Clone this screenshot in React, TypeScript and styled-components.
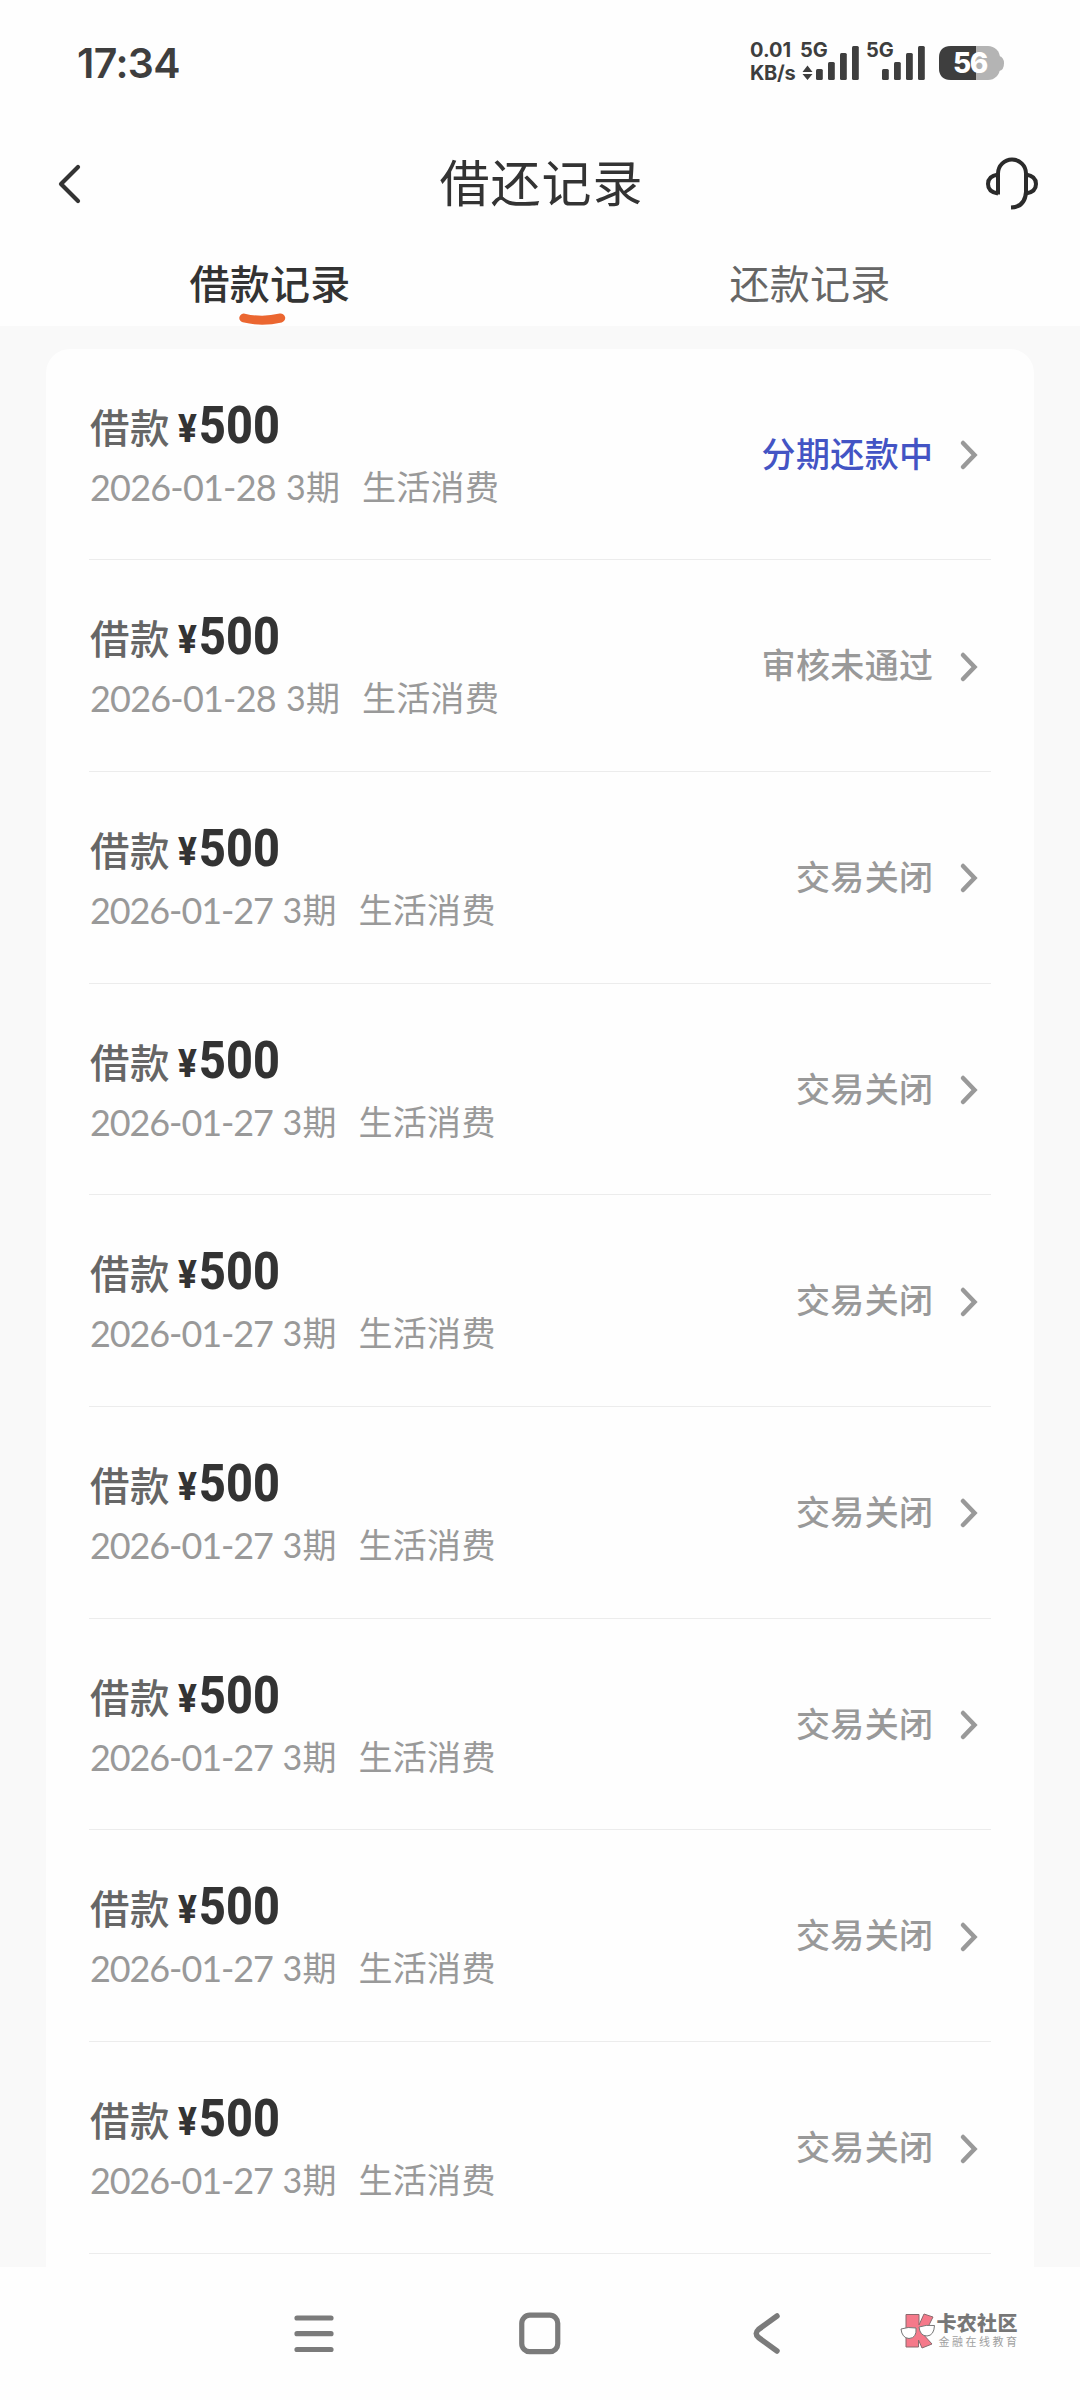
import React from "react";
import styled, { createGlobalStyle } from "styled-components";

const cjk = `"Noto Sans CJK SC", sans-serif`;

const GlobalStyle = createGlobalStyle`
  * { box-sizing: border-box; }
  body { margin: 0; background: #fefefe; font-family: ${cjk}; }
`;

const Page = styled.div`
  width: 1080px;
  height: 2400px;
  display: flex;
  flex-direction: column;
  background: #fefefe;
  overflow: hidden;
`;

const StatusBar = styled.header`
  height: 110px;
  padding: 42px 76px 0 77px;
  display: flex;
  justify-content: space-between;
  align-items: flex-start;
  color: #3e3e3e;
`;

const Clock = styled.time`
  font: 600 41px/42px Inter, ${cjk};
  letter-spacing: -0.6px;
`;

const StatusIcons = styled.div`
  height: 42px;
  display: flex;
`;

const Speed = styled.div`
  width: 51px;
  margin-top: -3px;
  display: flex;
  flex-direction: column;
  font: 700 20px/23px Inter, ${cjk};
  white-space: nowrap;
`;

const SpeedText = styled.span<{ $spacing: number }>`
  letter-spacing: ${(p) => p.$spacing}px;
`;

const Signal = styled.div<{ $gap: number }>`
  position: relative;
  width: 58px;
  margin-right: ${(p) => p.$gap}px;
  height: 38px;
`;

const SignalLabel = styled.span`
  position: absolute;
  left: -1px;
  top: -4px;
  font: 700 20px/24px Inter, ${cjk};
`;

const Battery = styled.div`
  position: relative;
  width: 65px;
  height: 38px;
`;

const BatteryText = styled.span`
  position: absolute;
  left: 0;
  top: 4px;
  width: 62px;
  height: 34px;
  text-align: center;
  color: #fff;
  font: 800 28px/34px Inter, ${cjk};
  letter-spacing: -1.5px;
`;

const TitleBar = styled.div`
  height: 144px;
  padding: 4px 40px 0 56px;
  display: flex;
  align-items: center;
  justify-content: space-between;
`;

const Title = styled.h1`
  margin: -8px 0 0;
  padding-left: 15px;
  color: #333;
  font: 400 50px/72px ${cjk};
  letter-spacing: 1px;
`;

const Tabs = styled.nav`
  height: 72px;
  display: flex;
`;

const Tab = styled.div<{ $active?: boolean }>`
  position: relative;
  flex: 1;
  text-align: center;
  font: ${(p) => (p.$active ? 500 : 400)} 40px/56px ${cjk};
  letter-spacing: 0.2px;
  color: ${(p) => (p.$active ? "#333" : "#666")};
`;

const Smile = styled.svg`
  position: absolute;
  left: 238px;
  top: 58px;
`;

const Content = styled.main`
  height: 1940.5px;
  padding: 22.5px 46px 0;
  background: #f9f9f9;
  overflow: hidden;
`;

const Card = styled.section`
  height: 1930px;
  padding: 0 43px;
  background: #fefefe;
  border-radius: 24px 24px 0 0;
`;

const Row = styled.article`
  height: 211.7px;
  padding: 0 12px 0 1px;
  display: flex;
  justify-content: space-between;
  border-bottom: 1px solid #ececec;
`;

const Info = styled.div`
  padding-top: 46px;
  display: flex;
  flex-direction: column;
`;

const Headline = styled.div`
  height: 60px;
  display: flex;
  align-items: baseline;
`;

const Kind = styled.span`
  width: 88px;
  color: #666;
  font: 500 39.5px/60px ${cjk};
  letter-spacing: 0.5px;
`;

const Yen = styled.span`
  width: 21px;
  color: #333;
  font: 800 38px/60px Roboto, ${cjk};
  transform: translateY(-1px) scaleX(0.92);
  transform-origin: 0 50%;
`;

const Amount = styled.span`
  color: #333;
  font: 800 52.5px/60px Roboto, ${cjk};
  transform: scaleX(0.89);
  transform-origin: 0 50%;
`;

const Detail = styled.div`
  display: flex;
  height: 56px;
  margin-top: 4px;
  color: #999;
  font: 400 34px/56px Lato, ${cjk};
  white-space: pre;
`;

const DateText = styled.span<{ $narrow: boolean }>`
  width: ${(p) => (p.$narrow ? 192.5 : 196)}px;
  font-size: 36px;
  letter-spacing: ${(p) => (p.$narrow ? -1.1 : -0.8)}px;
`;

const Term = styled.span`
  width: 76px;
  letter-spacing: 0.2px;
`;

const Purpose = styled.span`
  letter-spacing: 0.3px;
`;

const Status = styled.div<{ $active?: boolean }>`
  padding-top: 76px;
  display: flex;
  align-items: flex-start;
  gap: 25.5px;
  color: ${(p) => (p.$active ? "#4354c4" : "#999")};
  font: 500 34px/56px ${cjk};
  letter-spacing: 0.4px;
`;

const Chevron = styled.svg`
  margin-top: 14.5px;
`;

const NavBar = styled.footer`
  flex: 1;
  padding: 43px 60px 0 291.5px;
  display: flex;
  align-items: flex-start;
`;

const NavIcon = styled.svg<{ $after: number }>`
  flex: none;
  margin-right: ${(p) => p.$after}px;
`;

const Brand = styled.div`
  display: flex;
  align-items: flex-start;
`;

const BrandNames = styled.div`
  display: flex;
  flex-direction: column;
  padding: 2px 0 0 1px;
`;

const BrandName = styled.strong`
  color: #777;
  font: 900 20px/21px ${cjk};
  letter-spacing: 0.3px;
  white-space: nowrap;
`;

const BrandTagline = styled.span`
  padding-left: 2px;
  color: #a0a0a0;
  font: 400 11px/16px ${cjk};
  letter-spacing: 2.5px;
  white-space: nowrap;
`;

const barHeights = [11, 18, 27, 34];

function Bars({ x, arrows }: { x: number; arrows?: boolean }) {
  return (
    <svg width="62" height="38" viewBox="0 0 62 38" fill="#3e3e3e">
      {arrows && <path d="M6.500 23.500 11.500 30H1.500ZM1.500 32H11.500L6.500 38Z" />}
      {barHeights.map((h, i) => (
        <rect key={h} x={x + i * 12} y={38 - h} width="6.800" height={h} rx="1.500" />
      ))}
    </svg>
  );
}

type RecordItem = { date: string; status: string; active?: boolean };

const records: RecordItem[] = [
  { date: "2026-01-28", status: "分期还款中", active: true },
  { date: "2026-01-28", status: "审核未通过" },
  ...Array.from({ length: 7 }, () => ({ date: "2026-01-27", status: "交易关闭" })),
];

function LoanRow({ date, status, active }: RecordItem) {
  return (
    <Row>
      <Info>
        <Headline>
          <Kind>借款</Kind>
          <Yen>¥</Yen>
          <Amount>500</Amount>
        </Headline>
        <Detail>
          <DateText $narrow={date.endsWith("7")}>{date}</DateText>
          <Term>3期</Term>
          <Purpose>生活消费</Purpose>
        </Detail>
      </Info>
      <Status $active={active}>
        {status}
        <Chevron width="20" height="32" viewBox="0 0 20 32" fill="none">
          <path d="M4 4 15.500 16 4 28" stroke="#999" strokeWidth="4.500" strokeLinecap="round" />
        </Chevron>
      </Status>
    </Row>
  );
}

export default function App() {
  return (
    <Page>
      <GlobalStyle />
      <StatusBar>
        <Clock>17:34</Clock>
        <StatusIcons>
          <Speed>
            <SpeedText $spacing={0}>0.01</SpeedText>
            <SpeedText $spacing={-0.3}>KB/s</SpeedText>
          </Speed>
          <Signal $gap={8}>
            <SignalLabel>5G</SignalLabel>
            <Bars x={15} arrows />
          </Signal>
          <Signal $gap={14}>
            <SignalLabel>5G</SignalLabel>
            <Bars x={15} />
          </Signal>
          <Battery>
            <svg width="65" height="38" viewBox="0 0 65 38">
              <path d="M60 14q5 1 5 7.500t-5 7.500z" fill="#b4b4b4" />
              <rect y="4" width="61" height="34" rx="12" fill="#b4b4b4" />
              <path d="M37 4H12Q0 4 0 16V26Q0 38 12 38H37Z" fill="#3e3e3e" />
            </svg>
            <BatteryText>56</BatteryText>
          </Battery>
        </StatusIcons>
      </StatusBar>
      <TitleBar>
        <svg width="28" height="44" viewBox="0 0 28 44" fill="none">
          <path d="M22 5 5 22 22 39" stroke="#333" strokeWidth="4.200" strokeLinecap="round" strokeLinejoin="round" />
        </svg>
        <Title>借还记录</Title>
        <svg width="56" height="56" viewBox="984 155 56 56" fill="none" stroke="#2b2b2b" strokeWidth="4">
          <path d="M998 193.500V172.500A14 14 0 0 1 1026 172.500V191Q1025 206 1011 206.500" />
          <path d="M998 173.500Q988 175 988 183T998 192.500M1026 173.500Q1036 175 1036 183T1026 192.500" />
        </svg>
      </TitleBar>
      <Tabs>
        <Tab $active>
          借款记录
          <Smile width="49" height="16" viewBox="0 0 49 16" fill="none">
            <path d="M5.800 6Q24 10.500 42.700 6" stroke="#eb6630" strokeWidth="9" strokeLinecap="round" />
          </Smile>
        </Tab>
        <Tab>还款记录</Tab>
      </Tabs>
      <Content>
        <Card>
          {records.map((r, i) => (
            <LoanRow key={i} {...r} />
          ))}
        </Card>
      </Content>
      <NavBar>
        <NavIcon $after={183.5} width="44" height="48" viewBox="0 0 44 48" stroke="#7b7b7b" strokeWidth="5.200" strokeLinecap="round">
          <path d="M5 8H39M5 23.700H39M5 39.500H39" />
        </NavIcon>
        <NavIcon $after={188.5} width="44" height="48" viewBox="0 0 44 48" fill="none" stroke="#7b7b7b" strokeWidth="5.200">
          <rect x="2.750" y="5.200" width="36" height="36.500" rx="8" />
        </NavIcon>
        <NavIcon $after={117} width="31" height="48" viewBox="0 0 31 48" fill="none" stroke="#7b7b7b" strokeWidth="5.500" strokeLinecap="round">
          <path d="M25 6 6.500 19.500Q2 23.500 6.500 27.500L25 41" />
        </NavIcon>
        <Brand>
          <svg width="36" height="42" viewBox="0 0 36 42" strokeLinejoin="round">
            <path d="M6 4.500H19V15L24 4L33 7L27 19L22 23L32 34L22 38L18.500 30V37H6Z" fill="#f5798a" stroke="#8a6a6e" />
            <path d="M1 19Q8 16.500 16 18Q17 28 9 28.500Q2 28 1 19ZM19 17Q26 14.500 34.500 15.500Q34 25.500 27 26Q20 26 19 17Z" fill="#fff" stroke="#777" />
          </svg>
          <BrandNames>
            <BrandName>卡农社区</BrandName>
            <BrandTagline>金融在线教育</BrandTagline>
          </BrandNames>
        </Brand>
      </NavBar>
    </Page>
  );
}
